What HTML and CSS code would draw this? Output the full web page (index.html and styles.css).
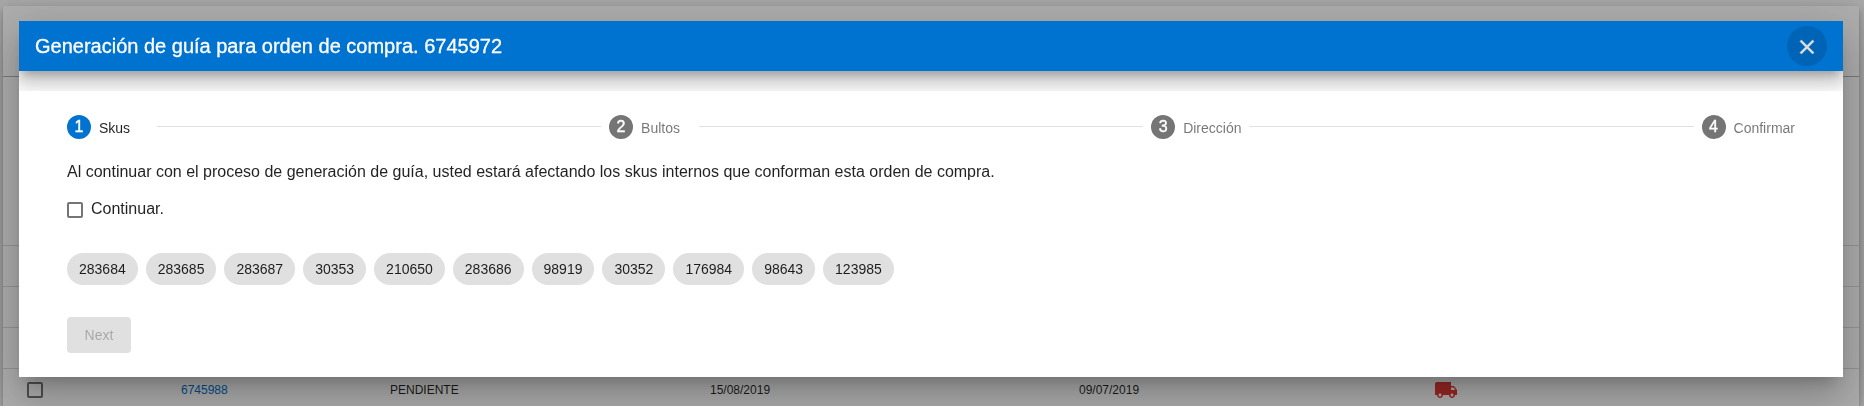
FILE: index.html
```
<!DOCTYPE html>
<html lang="es">
<head>
<meta charset="utf-8">
<title>Generación de guía</title>
<link rel="stylesheet" href="styles.css">
</head>
<body>
<main class="card">
  <div class="card-header"></div>
  <div class="row row-tall"></div>
  <div class="row"></div>
  <div class="row"></div>
  <div class="row"></div>
  <div class="row row-last">
    <span class="col-check"><span class="checkbox"></span></span>
    <a class="col-order">6745988</a>
    <span class="col-status">PENDIENTE</span>
    <span class="col-date">15/08/2019</span>
    <span class="col-delivery">09/07/2019</span>
    <svg class="truck" viewBox="0 0 24 24"><path d="M20 8h-3V4H3c-1.100 0-2 .9-2 2v11h2c0 1.660 1.340 3 3 3s3-1.340 3-3h6c0 1.660 1.340 3 3 3s3-1.340 3-3h2v-5l-3-4zM6 18.500c-.83 0-1.500-.67-1.500-1.500s.67-1.500 1.500-1.500 1.500.67 1.500 1.500-.67 1.500-1.500 1.500zm13.500-9l1.960 2.500H17V9.500h2.500zm-1.500 9c-.83 0-1.500-.67-1.500-1.500s.67-1.500 1.500-1.500 1.500.67 1.500 1.500-.67 1.500-1.500 1.500z"/></svg>
  </div>
</main>
<div class="overlay">
  <section class="dialog" role="dialog">
    <header class="toolbar">
      <h1 class="title">Generación de guía para orden de compra. 6745972</h1>
      <button class="close" aria-label="Cerrar"><svg viewBox="0 0 24 24"><path d="M19 6.410L17.590 5 12 10.590 6.410 5 5 6.410 10.590 12 5 17.590 6.410 19 12 13.410 17.590 19 19 17.590 13.410 12z"/></svg></button>
    </header>
    <div class="content">
      <div class="stepper">
        <div class="step active"><span class="num">1</span><span class="label">Skus</span></div>
        <div class="line"></div>
        <div class="step"><span class="num">2</span><span class="label">Bultos</span></div>
        <div class="line"></div>
        <div class="step"><span class="num">3</span><span class="label">Dirección</span></div>
        <div class="line"></div>
        <div class="step"><span class="num">4</span><span class="label">Confirmar</span></div>
      </div>
      <p class="notice">Al continuar con el proceso de generación de guía, usted estará afectando los skus internos que conforman esta orden de compra.</p>
      <label class="confirm"><span class="checkbox"></span>Continuar.</label>
      <div class="chips">
        <span class="chip">283684</span><span class="chip">283685</span><span class="chip">283687</span><span class="chip">30353</span><span class="chip">210650</span><span class="chip">283686</span><span class="chip">98919</span><span class="chip">30352</span><span class="chip">176984</span><span class="chip">98643</span><span class="chip">123985</span>
      </div>
      <button class="next" disabled>Next</button>
    </div>
  </section>
</div>
</body>
</html>
```
FILE: styles.css
```
* { box-sizing: border-box; }
body {
  margin: 0;
  height: 406px;
  padding: 6px 5px 0 3px;
  overflow: hidden;
  background: #fafafa;
  font-family: "Liberation Sans", Arial, sans-serif;
  color: rgba(0, 0, 0, .87);
}
.card {
  height: 400px;
  background: #fff;
  box-shadow: 0 3px 5px -1px rgba(0, 0, 0, .2), 0 6px 10px 0 rgba(0, 0, 0, .14), 0 1px 18px 0 rgba(0, 0, 0, .12);
}
.card-header { height: 71px; border-bottom: 1px solid rgba(0, 0, 0, .3); }
.row {
  display: grid;
  grid-template-columns: 154px 209px 320px 369px 355px 24px;
  align-items: center;
  height: 41px;
  padding-left: 24px;
  border-bottom: 1px solid rgba(0, 0, 0, .14);
  font-size: 12px;
}
.row-tall { height: 169px; }
.row-last { height: 37px; padding-top: 4px; border-bottom: 0; }
.col-check { display: flex; }
.col-order { color: #0072d0; }
.truck { width: 24px; height: 24px; fill: #e53935; }
.checkbox {
  flex: none;
  width: 16px;
  height: 16px;
  border: 2px solid rgba(0, 0, 0, .54);
  border-radius: 2px;
}
.overlay {
  position: fixed;
  inset: 0;
  padding: 21px 21px 29px 19px;
  background: rgba(0, 0, 0, .32);
}
.dialog {
  height: 356px;
  background: #fff;
  box-shadow: 0 11px 15px -7px rgba(0, 0, 0, .2), 0 24px 38px 3px rgba(0, 0, 0, .14), 0 9px 46px 8px rgba(0, 0, 0, .12);
}
.toolbar {
  position: relative;
  display: flex;
  align-items: center;
  justify-content: space-between;
  height: 50px;
  padding: 0 16px;
  background: #0072d0;
  color: #fff;
  box-shadow: 0 7px 8px -4px rgba(0, 0, 0, .2), 0 12px 17px 2px rgba(0, 0, 0, .14), 0 5px 22px 4px rgba(0, 0, 0, .12);
  clip-path: inset(0 0 -20px 0);
}
.title { margin: 0; font-size: 20px; font-weight: 400; -webkit-text-stroke: .3px #fff; }
.close {
  display: grid;
  place-items: center;
  width: 40px;
  height: 40px;
  padding: 2px 0 0;
  border: 0;
  border-radius: 50%;
  background: rgba(0, 0, 0, .12);
}
.close svg { width: 24px; height: 24px; fill: #e0e0e0; stroke: #e0e0e0; stroke-width: .5px; }
.content { padding: 44px 48px 24px; }
.stepper { display: flex; align-items: center; height: 24px; }
.step { display: flex; align-items: center; gap: 8px; color: rgba(0, 0, 0, .54); }
.num {
  width: 24px;
  height: 24px;
  border-radius: 50%;
  background: #757575;
  color: #fff;
  font-size: 16px;
  line-height: 24px;
  text-align: center;
  -webkit-text-stroke: .4px #fff;
}
.label { min-width: 50px; padding-top: 1px; font-size: 14px; }
.step.active { color: rgba(0, 0, 0, .87); }
.active .num { background: #0072d0; }
.line { flex: 1; height: 1px; margin: 0 8px 1px; background: #e0e0e0; }
.notice { margin: 23px 0 0; font-size: 16px; line-height: 20px; }
.confirm { display: flex; align-items: center; gap: 8px; height: 20px; margin-top: 17px; font-size: 16px; }
.confirm .checkbox { margin-top: 1px; }
.chips { display: flex; gap: 8px; margin-top: 34px; }
.chip {
  height: 32px;
  padding: 0 12px;
  border-radius: 16px;
  background: #e0e0e0;
  font-size: 14px;
  line-height: 32px;
}
.next {
  width: 64px;
  height: 36px;
  margin-top: 32px;
  border: 0;
  border-radius: 4px;
  background: #e0e0e0;
  color: rgba(0, 0, 0, .26);
  font: 14px "Liberation Sans", Arial, sans-serif;
}
```
